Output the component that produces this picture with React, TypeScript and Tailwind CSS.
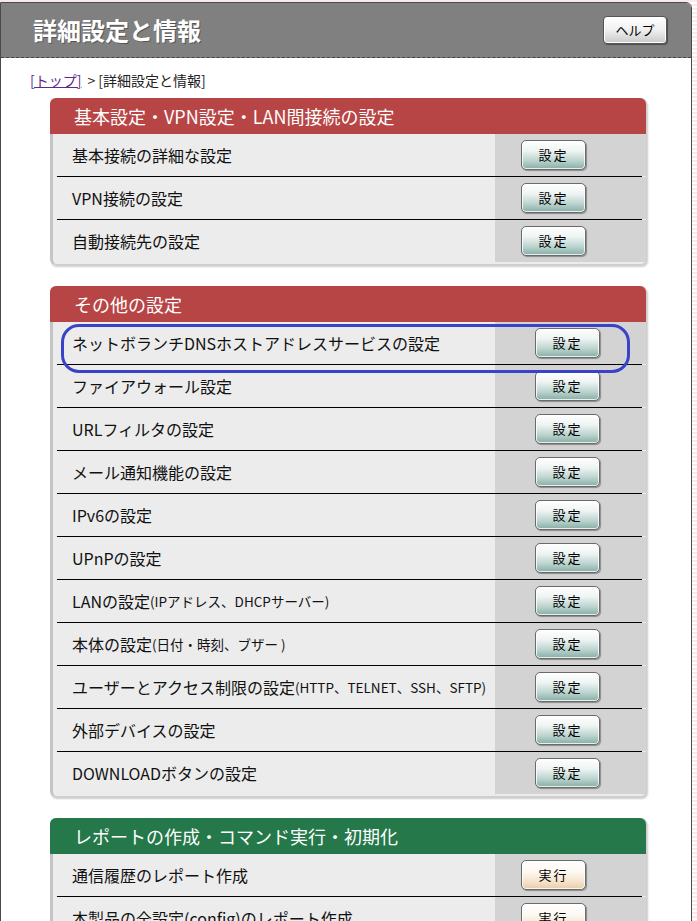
import React from 'react'

type Row = { label: string; sub?: string }

const basic: Row[] = [
  { label: '基本接続の詳細な設定' },
  { label: 'VPN接続の設定' },
  { label: '自動接続先の設定' },
]

const others: Row[] = [
  { label: 'ネットボランチDNSホストアドレスサービスの設定' },
  { label: 'ファイアウォール設定' },
  { label: 'URLフィルタの設定' },
  { label: 'メール通知機能の設定' },
  { label: 'IPv6の設定' },
  { label: 'UPnPの設定' },
  { label: 'LANの設定', sub: '(IPアドレス、DHCPサーバー)' },
  { label: '本体の設定', sub: '(日付・時刻、ブザー )' },
  { label: 'ユーザーとアクセス制限の設定', sub: '(HTTP、TELNET、SSH、SFTP)' },
  { label: '外部デバイスの設定' },
  { label: 'DOWNLOADボタンの設定' },
]

const reports: Row[] = [
  { label: '通信履歴のレポート作成' },
  { label: '本製品の全設定(config)のレポート作成' },
]

function ActionButton({ text, tone }: { text: string; tone: 'teal' | 'beige' }) {
  return (
    <button
      className={
        'h-[30px] w-[65px] rounded-[5px] border border-[#6a6a6a] text-[13px] tracking-[2px] text-black shadow-[1px_1px_1px_rgba(0,0,0,0.35),inset_0_0_0_1px_rgba(255,255,255,0.8)] ' +
        (tone === 'teal'
          ? 'bg-[linear-gradient(#ffffff_0%,#eef4f3_35%,#bcd4cf_70%,#86aea6_100%)]'
          : 'bg-[linear-gradient(#ffffff_0%,#fdf8f1_40%,#f3dfc6_80%,#e9cba6_100%)]')
      }
    >
      {text}
    </button>
  )
}

function Section({
  title,
  rows,
  color,
  button,
  tone,
  btnPad,
}: {
  title: string
  rows: Row[]
  color: string
  button: string
  tone: 'teal' | 'beige'
  btnPad: string
}) {
  return (
    <div className="ml-[49px] w-[597px] rounded-[6px] border border-[#cfcfcf] border-l-[3px] border-l-[#c4c4c4] bg-[#ececec] pb-[2px] shadow-[1px_2px_2px_rgba(0,0,0,0.2)]">
      <div className={'-ml-[3px] -mt-px flex h-[36px] items-center rounded-t-[6px] pl-[24px] text-[18px] text-white ' + color}>
        {title}
      </div>
      {rows.map((r, i) => (
        <div key={i}>
          {i > 0 && <div className="mx-[4px] h-px bg-black" />}
          <div className="flex h-[42px]">
            <div className="flex flex-1 items-center whitespace-nowrap pl-[19px] text-[16px] text-[#111]">
              {r.label}
              {r.sub && <span className="text-[13.5px]">{r.sub}</span>}
            </div>
            <div className={'flex w-[151px] shrink-0 items-center bg-[#d3d3d3] ' + btnPad}>
              <ActionButton text={button} tone={tone} />
            </div>
          </div>
        </div>
      ))}
    </div>
  )
}

export default function App() {
  return (
    <div
      className="min-h-[921px] bg-[repeating-linear-gradient(#fbe9ea_0px,#fbe9ea_2px,#ffffff_2px,#ffffff_4px)] pt-[2px]"
      style={{ fontFamily: '"Noto Sans CJK JP", "Noto Sans", sans-serif' }}
    >
      <div className="relative h-[930px] w-[692px] overflow-hidden rounded-tr-[6px] border border-[#4a4a4a] bg-white">
        <div className="flex h-[55px] items-center justify-between border-b border-dashed border-b-[#444] bg-[#808080] pl-[32px] pr-[24px]">
          <h1 className="text-[24px] font-bold text-white [text-shadow:1px_1px_0_rgba(0,0,0,0.35)]">詳細設定と情報</h1>
          <button className="h-[28px] w-[64px] rounded-[4px] border border-[#555] bg-[linear-gradient(#ffffff,#f0f0f0_50%,#c9c9c9)] text-[13px] text-black shadow-[1px_1px_1px_rgba(0,0,0,0.4),inset_0_0_0_1px_#fff]">
            ヘルプ
          </button>
        </div>

        <div className="flex h-[40px] items-center pl-[29px] pt-[4px] text-[14px] text-[#222]">
          <a href="#" className="text-[#5b2a8c] underline">[トップ]</a>
          <span className="ml-[6px]">&gt; [詳細設定と情報]</span>
        </div>

        <div className="flex flex-col gap-[21px]">
          <Section
            title="基本設定・VPN設定・LAN間接続の設定"
            rows={basic}
            color="bg-[#b84545]"
            button="設定"
            tone="teal"
            btnPad="pl-[26px]"
          />
          <Section
            title="その他の設定"
            rows={others}
            color="bg-[#b84545]"
            button="設定"
            tone="teal"
            btnPad="pl-[40px]"
          />
          <Section
            title="レポートの作成・コマンド実行・初期化"
            rows={reports}
            color="bg-[#24784a]"
            button="実行"
            tone="beige"
            btnPad="pl-[26px]"
          />
        </div>

        <div className="pointer-events-none absolute left-[60px] top-[321px] h-[49px] w-[569px] rounded-[18px] border-[3px] border-[#3a43c6]" />
      </div>
    </div>
  )
}
